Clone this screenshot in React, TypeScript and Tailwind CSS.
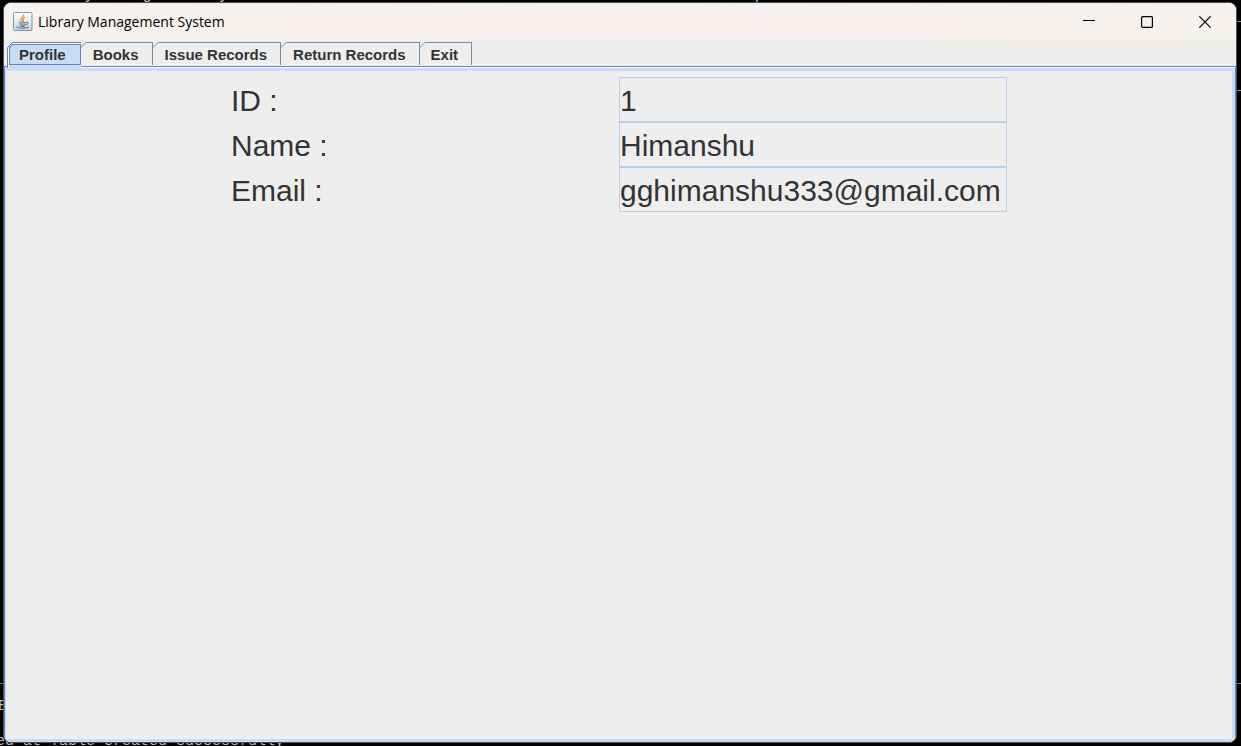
import { useState } from "react";

const tabs = ["Profile", "Books", "Issue Records", "Return Records", "Exit"];

const fields = [
  { id: "member-id", label: "ID :", value: "1" },
  { id: "member-name", label: "Name :", value: "Himanshu" },
  { id: "member-email", label: "Email :", value: "gghimanshu333@gmail.com" },
];

function JavaIcon() {
  return (
    <svg className="size-5 shrink-0" viewBox="0 0 20 20" aria-hidden="true">
      <defs>
        <linearGradient id="cup-bg" x1="0" y1="0" x2="0" y2="1">
          <stop offset="0" stopColor="#ffffff" />
          <stop offset="1" stopColor="#c6d2dc" />
        </linearGradient>
      </defs>
      <rect x="0.5" y="0.5" width="18.5" height="18" rx="1" fill="url(#cup-bg)" stroke="#7e98ad" />
      <path d="M10.6 2.5c.7 2.2-3.6 3.2-2.6 5.4.3.7.9 1.2 1.4 1.9M12 5.3c-1.9.9-2.6 1.8-1.7 3 .5.7.3 1.3-.4 1.9" fill="none" stroke="#ee8a3c" strokeWidth="1.3" />
      <path d="M5.8 10.5c1.5.7 6 .7 7.3 0M6.6 12.5c1.6.7 4.3.7 5.7 0M13.2 10.3c2.6-.3 2.2 2-.5 2.6M4 14.7c-1 .9 2.3 1.4 5.5 1.4s6.5-.5 5.5-1.4M7 14c1.500.5 3.800.5 5 0" fill="none" stroke="#587f9f" strokeWidth="1.1" />
    </svg>
  );
}

function TitleBar() {
  const control = "flex h-full w-[58px] items-center justify-center";
  return (
    <header className="flex h-[37px] shrink-0 items-center bg-linear-to-r from-[#f6f2ed] via-[#f9efef] to-[#f6f2ed] pr-[2px] pl-[9px]">
      <JavaIcon />
      <h1 className="ml-[5px] flex-1 font-['Open_Sans',sans-serif] text-sm text-black">
        Library Management System
      </h1>
      <button type="button" aria-label="Minimize" className={control}>
        <svg width="12" height="12" viewBox="0 0 12 12" stroke="#000" shapeRendering="crispEdges">
          <path d="M0 4.5h12" />
        </svg>
      </button>
      <button type="button" aria-label="Maximize" className={control}>
        <svg width="12" height="12" viewBox="0 0 12 12" stroke="#000" fill="none">
          <rect x="0.6" y="0.6" width="10.8" height="10.8" rx="1" strokeWidth="1.2" />
        </svg>
      </button>
      <button type="button" aria-label="Close" className={control}>
        <svg width="12" height="12" viewBox="0 0 12 12" stroke="#000" strokeWidth="1.2">
          <path d="M0.3 0.3l11.4 11.4M11.7 0.3L0.3 11.7" />
        </svg>
      </button>
    </header>
  );
}

function Tab({ name, selected, onSelect }: { name: string; selected: boolean; onSelect: () => void }) {
  if (selected) {
    return (
      <button
        type="button"
        role="tab"
        aria-selected
        onClick={onSelect}
        className="relative -mb-[2px] -ml-[2px] flex h-[26px] items-start border-t border-l border-[#6382bf] bg-[#c8ddf2] pt-px pl-px shadow-[inset_1px_1px_0_#ffffff]"
      >
        <span className="flex h-[21px] items-center border border-[#6382bf] bg-[#c8ddf2] pt-px pr-[14px] pl-[9px]">
          {name}
        </span>
        <svg className="absolute -top-px -left-px size-[7px]" viewBox="0 0 7 7" aria-hidden="true">
          <path d="M0 0H7L0 7Z" fill="#eeeeee" />
          <path d="M0.5 6.5V5.5L5.5 0.5H7" fill="none" stroke="#6382bf" />
          <path d="M2.5 7V6L6 2.5H7" fill="none" stroke="#6382bf" />
        </svg>
      </button>
    );
  }
  return (
    <button
      type="button"
      role="tab"
      aria-selected={false}
      onClick={onSelect}
      className="relative flex h-[23px] items-center border-t border-r border-[#7a8a99] pt-px pr-[13px] pl-3 last:pl-[11px]"
    >
      {name}
      <svg className="absolute -top-px left-0 size-[6px]" viewBox="0 0 6 6" aria-hidden="true">
        <path d="M0 0H6L0 6Z" fill="#eeeeee" />
        <path d="M0 5.5L5.5 0" fill="none" stroke="#7a8a99" />
      </svg>
    </button>
  );
}

function Backdrop() {
  return (
    <div aria-hidden="true" className="absolute inset-0 overflow-hidden whitespace-pre font-['Liberation_Mono',monospace]">
      <p className="absolute -top-[15px] left-[27px] text-base leading-5 text-[#d8d2a0]">Library Management System</p>
      <div className="absolute top-0 left-[756px] h-[3px] w-[2px] bg-[#61a5bd]" />
      <div className="absolute top-[21px] right-0 h-px w-1 bg-[#5c9fb5]" />
      <div className="absolute top-[90px] right-0 h-px w-1 bg-[#5c9fb5]" />
      <div className="absolute top-[683px] h-px w-full bg-[#56808a]" />
      <p className="absolute top-[697px] -left-[2px] text-[15px] leading-5 text-[#ccc4ad]">E</p>
      <p className="absolute top-[732px] -left-[4px] text-[15px] leading-5 text-[#bcbcbc]">ed at Table created successfully</p>
    </div>
  );
}

export default function App() {
  const [active, setActive] = useState("Profile");

  return (
    <div className="relative flex min-h-screen overflow-hidden bg-black pt-[2px] pr-1 pb-[3px] pl-[3px] font-['Liberation_Sans',Arial,sans-serif] text-[#333333]">
      <Backdrop />
      <main className="relative flex flex-1 flex-col overflow-hidden rounded-lg border border-[#4b5056] bg-[#eeeeee]">
        <TitleBar />
        <div role="tablist" className="flex h-[26px] shrink-0 items-start pt-[2px] pl-[5px] text-[15px] leading-5 font-bold">
          {tabs.map((name) => (
            <Tab key={name} name={name} selected={name === active} onSelect={() => setActive(name)} />
          ))}
        </div>
        <section role="tabpanel" aria-label={active} className="flex flex-1 border border-b-0 border-[#6382bf]">
          <div className="flex-1 border-t border-white">
            <div className="h-full border-t-[3px] border-r-[3px] border-b-[3px] border-l border-[#c8ddf2] pt-[6px]">
              {active === "Profile" && (
                <form className="mx-auto w-full max-w-[776px] text-[30px]">
                  {fields.map((field) => (
                    <div key={field.id} className="grid grid-cols-2">
                      <label htmlFor={field.id} className="flex h-[45px] items-center pt-[2px]">
                        {field.label}
                      </label>
                      <input
                        id={field.id}
                        readOnly
                        value={field.value}
                        className="h-[45px] w-full min-w-0 border border-[#b8cfe5] bg-transparent pt-[2px] outline-none"
                      />
                    </div>
                  ))}
                </form>
              )}
            </div>
          </div>
        </section>
      </main>
    </div>
  );
}
